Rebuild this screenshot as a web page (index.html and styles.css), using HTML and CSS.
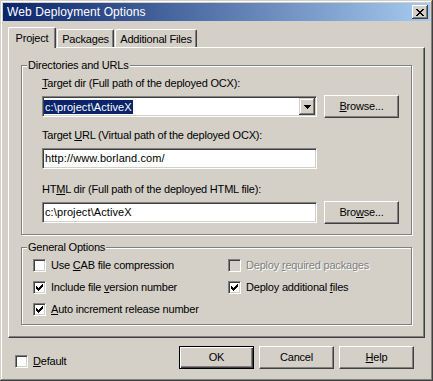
FILE: index.html
```html
<!DOCTYPE html>
<html>
<head>
<meta charset="utf-8">
<title>Web Deployment Options</title>
<link rel="stylesheet" href="styles.css">
</head>
<body>
<div class="window">
  <div class="titlebar">
    <span class="title">Web Deployment Options</span>
    <span class="close"><svg width="8" height="7" viewBox="0 0 8 7" shape-rendering="crispEdges"><path d="M0 0h2v1h-2zM6 0h2v1h-2zM1 1h2v1h-2zM5 1h2v1h-2zM2 2h4v1h-4zM3 3h2v1h-2zM2 4h4v1h-4zM1 5h2v1h-2zM5 5h2v1h-2zM0 6h2v1h-2zM6 6h2v1h-2z" fill="#000"/></svg></span>
  </div>
  <div class="content">
    <div class="tabs">
      <div class="tab active">Project</div>
      <div class="tab packages">Packages</div>
      <div class="tab files">Additional Files</div>
    </div>
    <div class="panel">
      <fieldset class="group dirs">
        <legend>Directories and URLs</legend>
        <div class="group-body">
          <div class="label"><u>T</u>arget dir (Full path of the deployed OCX):</div>
          <div class="row first">
            <div class="field combo">
              <span class="sel">c:\project\ActiveX</span>
              <span class="drop"><svg width="7" height="4" viewBox="0 0 7 4" shape-rendering="crispEdges"><path d="M0 0h7v1h-7zM1 1h5v1h-5zM2 2h3v1h-3zM3 3h1v1h-1z" fill="#000"/></svg></span>
            </div>
            <button class="btn"><u>B</u>rowse...</button>
          </div>
          <div class="label second">Target <u>U</u>RL (Virtual path of the deployed OCX):</div>
          <div class="field url">http://www.borland.com/</div>
          <div class="label third">HT<u>M</u>L dir (Full path of the deployed HTML file):</div>
          <div class="row last">
            <div class="field">c:\project\ActiveX</div>
            <button class="btn">Bro<u>w</u>se...</button>
          </div>
        </div>
      </fieldset>
      <fieldset class="group options">
        <legend>General Options</legend>
        <div class="opts">
          <div class="check"><span class="box"></span><span>Use <u>C</u>AB file compression</span></div>
          <div class="check disabled"><span class="box"></span><span>Deploy <u>r</u>equired packages</span></div>
          <div class="check"><span class="box"><svg width="11" height="11" viewBox="0 0 11 11" shape-rendering="crispEdges"><path d="M2 4h1v3h-1zM3 5h1v3h-1zM4 6h1v3h-1zM5 5h1v3h-1zM6 4h1v3h-1zM7 3h1v3h-1zM8 2h1v3h-1z" fill="#000"/></svg></span><span>Include file <u>v</u>ersion number</span></div>
          <div class="check"><span class="box"><svg width="11" height="11" viewBox="0 0 11 11" shape-rendering="crispEdges"><path d="M2 4h1v3h-1zM3 5h1v3h-1zM4 6h1v3h-1zM5 5h1v3h-1zM6 4h1v3h-1zM7 3h1v3h-1zM8 2h1v3h-1z" fill="#000"/></svg></span><span>Deploy additional <u>f</u>iles</span></div>
          <div class="check"><span class="box"><svg width="11" height="11" viewBox="0 0 11 11" shape-rendering="crispEdges"><path d="M2 4h1v3h-1zM3 5h1v3h-1zM4 6h1v3h-1zM5 5h1v3h-1zM6 4h1v3h-1zM7 3h1v3h-1zM8 2h1v3h-1z" fill="#000"/></svg></span><span><u>A</u>uto increment release number</span></div>
        </div>
      </fieldset>
    </div>
    <div class="footer">
      <div class="check default-check"><span class="box"></span><span><u>D</u>efault</span></div>
      <div class="buttons">
        <button class="btn default">OK</button>
        <button class="btn">Cancel</button>
        <button class="btn"><u>H</u>elp</button>
      </div>
    </div>
  </div>
</div>
</body>
</html>
```

FILE: styles.css
```css
* {
  box-sizing: border-box;
}

html,
body {
  margin: 0;
  padding: 0;
}

body {
  width: 433px;
  height: 381px;
  font: 11px/13px "Liberation Sans", Arial, sans-serif;
  letter-spacing: -0.2px;
  color: #000;
  background: #d4d0c8;
}

.window {
  width: 433px;
  height: 381px;
  padding: 3px;
  background: #d4d0c8;
  box-shadow: inset -1px -1px #404040, inset 1px 1px #d4d0c8, inset -2px -2px #808080, inset 2px 2px #fff;
  display: flex;
  flex-direction: column;
}

.titlebar {
  height: 18px;
  flex: none;
  background: linear-gradient(to right, #0a246a, #a6caf0);
  display: flex;
  align-items: center;
  justify-content: space-between;
  padding: 0 2px 0 4px;
}

.title {
  color: #fff;
  font-size: 12px;
  letter-spacing: 0.1px;
}

.close {
  width: 16px;
  height: 14px;
  background: #d4d0c8;
  box-shadow: inset -1px -1px #404040, inset 1px 1px #fff, inset -2px -2px #808080;
  display: flex;
  align-items: center;
  justify-content: center;
}

.close svg,
.drop svg,
.box svg {
  display: block;
}

.content {
  flex: 1;
  padding: 6px 5px 0;
  display: flex;
  flex-direction: column;
}

.tabs {
  height: 20px;
  flex: none;
  display: flex;
  align-items: flex-end;
}

.tab {
  height: 18px;
  border-left: 1px solid #fff;
  border-top: 1px solid #fff;
  border-right: 1px solid #404040;
  box-shadow: inset -1px 0 #808080;
  border-top-left-radius: 2px;
  border-top-right-radius: 2px;
  display: flex;
  align-items: center;
  justify-content: center;
  padding-top: 1px;
}

.tab.active {
  width: 48px;
  height: 21px;
  margin-bottom: -1px;
  padding-top: 0;
  position: relative;
  z-index: 1;
  background: #d4d0c8;
}

.tab.packages {
  width: 57px;
  margin-left: 1px;
}

.tab.files {
  width: 82px;
  margin-left: 1px;
}

.panel {
  height: 291px;
  flex: none;
  border-left: 1px solid #fff;
  border-top: 1px solid #fff;
  border-right: 1px solid #404040;
  border-bottom: 1px solid #404040;
  box-shadow: inset -1px -1px #808080;
  padding: 11px 12px 0;
}

fieldset.group {
  margin: 0;
  padding: 5px 0 10px 0;
  border: 1px solid #808080;
  box-shadow: inset 1px 1px #fff, 1px 1px #fff;
  min-width: 0;
}

fieldset.group legend {
  padding: 0 1px;
  margin-left: 5px;
  line-height: 13px;
  background: #d4d0c8;
}

.group-body {
  padding-left: 20px;
}

.label {
  height: 13px;
  white-space: nowrap;
}

.row {
  display: flex;
  align-items: center;
  gap: 7px;
  height: 23px;
}

.row.first {
  margin-top: 5px;
}

.label.second {
  margin-top: 11px;
}

.field {
  width: 275px;
  height: 21px;
  flex: none;
  background: #fff;
  border: 1px solid;
  border-color: #808080 #fff #fff #808080;
  box-shadow: inset 1px 1px #404040, inset -1px -1px #d4d0c8;
  display: flex;
  align-items: center;
  padding-left: 2px;
  white-space: nowrap;
  letter-spacing: 0.1px;
}

.field.url {
  margin-top: 6px;
}

.label.third {
  margin-top: 14px;
}

.row.last {
  margin-top: 5px;
}

.combo {
  padding: 1px;
  align-items: stretch;
}

.sel {
  align-self: center;
  background: #0a246a;
  color: #fff;
  padding: 0 1px;
  line-height: 14px;
}

.drop {
  width: 16px;
  margin-left: auto;
  background: #d4d0c8;
  box-shadow: inset -1px -1px #404040, inset 1px 1px #d4d0c8, inset -2px -2px #808080, inset 2px 2px #fff;
  display: flex;
  align-items: center;
  justify-content: center;
}

.btn {
  width: 75px;
  height: 23px;
  flex: none;
  font: inherit;
  letter-spacing: inherit;
  color: #000;
  background: #d4d0c8;
  border: 1px solid;
  border-color: #fff #404040 #404040 #fff;
  box-shadow: inset -1px -1px #808080;
  padding: 0;
  margin: 0;
}

.btn.default {
  border-color: #000;
  box-shadow: inset 1px 1px #fff, inset -1px -1px #404040, inset -2px -2px #808080;
}

fieldset.options {
  margin-top: 6px;
  padding-bottom: 8px;
}

.opts {
  display: grid;
  grid-template-columns: 195px auto;
  row-gap: 9px;
  padding-left: 11px;
}

.check {
  display: flex;
  align-items: center;
  gap: 5px;
  height: 13px;
  white-space: nowrap;
}

.box {
  width: 13px;
  height: 13px;
  flex: none;
  background: #fff;
  border: 1px solid;
  border-color: #808080 #fff #fff #808080;
  box-shadow: inset 1px 1px #404040, inset -1px -1px #d4d0c8;
}

.check.disabled {
  color: #808080;
  text-shadow: 1px 1px 0 #fff;
}

.check.disabled .box {
  background: #d4d0c8;
}

.footer {
  display: flex;
  align-items: flex-start;
  padding: 8px 11px 0 7px;
}

.default-check {
  margin-top: 9px;
}

.buttons {
  margin-left: auto;
  display: flex;
  gap: 5px;
}
```
